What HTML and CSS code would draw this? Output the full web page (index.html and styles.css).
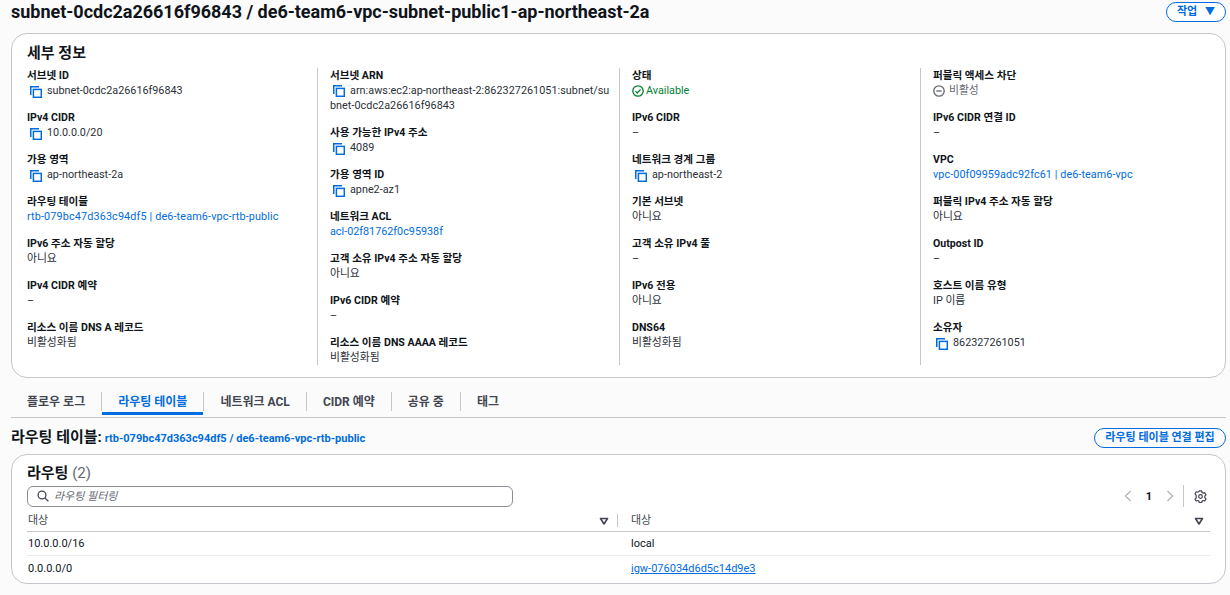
FILE: index.html
```html
<!DOCTYPE html>
<html lang="ko">
<head>
<meta charset="utf-8">
<title>서브넷 세부 정보</title>
<link rel="stylesheet" href="styles.css">
</head>
<body>
<svg class="defs" width="0" height="0" aria-hidden="true"><defs>
<symbol id="copy" viewBox="0 0 12 12"><path d="M.75 9V.75H9" fill="none" stroke="currentColor" stroke-width="1.5"/><rect x="3.4" y="3.4" width="7.9" height="7.9" fill="none" stroke="currentColor" stroke-width="1.5"/></symbol>
<symbol id="sort" viewBox="0 0 10 10"><path d="M1.5 2.500h7L5 8z" fill="none" stroke="currentColor" stroke-width="1.6" stroke-linejoin="round"/></symbol>
</defs></svg>
<header class="page-head">
  <h1>subnet-0cdc2a26616f96843 / de6-team6-vpc-subnet-public1-ap-northeast-2a</h1>
  <button class="btn btn-actions">작업 <span class="caret">▼</span></button>
</header>
<section class="card details">
  <h2>세부 정보</h2>
  <div class="cols">
    <div class="col">
      <div class="kv"><div class="k">서브넷 ID</div><div class="v c"><svg class="ic"><use href="#copy"/></svg>subnet-0cdc2a26616f96843</div></div>
      <div class="kv"><div class="k">IPv4 CIDR</div><div class="v c"><svg class="ic"><use href="#copy"/></svg>10.0.0.0/20</div></div>
      <div class="kv"><div class="k">가용 영역</div><div class="v c"><svg class="ic"><use href="#copy"/></svg>ap-northeast-2a</div></div>
      <div class="kv"><div class="k">라우팅 테이블</div><div class="v"><a class="wide">rtb-079bc47d363c94df5 | de6-team6-vpc-rtb-public</a></div></div>
      <div class="kv"><div class="k">IPv6 주소 자동 할당</div><div class="v">아니요</div></div>
      <div class="kv"><div class="k">IPv4 CIDR 예약</div><div class="v">–</div></div>
      <div class="kv"><div class="k">리소스 이름 DNS A 레코드</div><div class="v">비활성화됨</div></div>
    </div>
    <div class="col">
      <div class="kv"><div class="k">서브넷 ARN</div><div class="v c wrap"><svg class="ic"><use href="#copy"/></svg>arn:aws:ec2:ap-northeast-2:862327261051:subnet/su<br>bnet-0cdc2a26616f96843</div></div>
      <div class="kv"><div class="k">사용 가능한 IPv4 주소</div><div class="v c"><svg class="ic"><use href="#copy"/></svg>4089</div></div>
      <div class="kv"><div class="k">가용 영역 ID</div><div class="v c"><svg class="ic"><use href="#copy"/></svg>apne2-az1</div></div>
      <div class="kv"><div class="k">네트워크 ACL</div><div class="v"><a>acl-02f81762f0c95938f</a></div></div>
      <div class="kv"><div class="k">고객 소유 IPv4 주소 자동 할당</div><div class="v">아니요</div></div>
      <div class="kv"><div class="k">IPv6 CIDR 예약</div><div class="v">–</div></div>
      <div class="kv"><div class="k">리소스 이름 DNS AAAA 레코드</div><div class="v">비활성화됨</div></div>
    </div>
    <div class="col">
      <div class="kv"><div class="k">상태</div><div class="v ok"><svg class="st" viewBox="0 0 12 12"><circle cx="6" cy="6" r="5.2" fill="none" stroke="currentColor" stroke-width="1.3"/><path d="M3.4 6.1l1.9 1.9 3.3-3.6" fill="none" stroke="currentColor" stroke-width="1.3"/></svg>Available</div></div>
      <div class="kv"><div class="k">IPv6 CIDR</div><div class="v">–</div></div>
      <div class="kv"><div class="k">네트워크 경계 그룹</div><div class="v c"><svg class="ic"><use href="#copy"/></svg>ap-northeast-2</div></div>
      <div class="kv"><div class="k">기본 서브넷</div><div class="v">아니요</div></div>
      <div class="kv"><div class="k">고객 소유 IPv4 풀</div><div class="v">–</div></div>
      <div class="kv"><div class="k">IPv6 전용</div><div class="v">아니요</div></div>
      <div class="kv"><div class="k">DNS64</div><div class="v">비활성화됨</div></div>
    </div>
    <div class="col">
      <div class="kv"><div class="k">퍼블릭 액세스 차단</div><div class="v off"><svg class="st" viewBox="0 0 12 12"><circle cx="6" cy="6" r="5.2" fill="none" stroke="currentColor" stroke-width="1.3"/><path d="M3.3 6h5.400" fill="none" stroke="currentColor" stroke-width="1.3"/></svg>비활성</div></div>
      <div class="kv"><div class="k">IPv6 CIDR 연결 ID</div><div class="v">–</div></div>
      <div class="kv"><div class="k">VPC</div><div class="v"><a class="wider">vpc-00f09959adc92fc61 | de6-team6-vpc</a></div></div>
      <div class="kv"><div class="k">퍼블릭 IPv4 주소 자동 할당</div><div class="v">아니요</div></div>
      <div class="kv"><div class="k">Outpost ID</div><div class="v">–</div></div>
      <div class="kv"><div class="k">호스트 이름 유형</div><div class="v">IP 이름</div></div>
      <div class="kv"><div class="k">소유자</div><div class="v c"><svg class="ic"><use href="#copy"/></svg>862327261051</div></div>
    </div>
  </div>
</section>
<nav class="tabs">
  <span class="tab">플로우 로그</span>
  <span class="tab active">라우팅 테이블</span>
  <span class="tab">네트워크 ACL</span>
  <span class="tab">CIDR 예약</span>
  <span class="tab">공유 중</span>
  <span class="tab">태그</span>
</nav>
<div class="rt-head">
  <div class="rt-title"><strong>라우팅 테이블:</strong> <a>rtb-079bc47d363c94df5 / de6-team6-vpc-rtb-public</a></div>
  <button class="btn btn-edit">라우팅 테이블 연결 편집</button>
</div>
<section class="card routes">
  <h2>라우팅 <span class="count">(2)</span></h2>
  <div class="tools">
    <div class="search">
      <svg class="mag" viewBox="0 0 12 12"><circle cx="5" cy="5" r="3.9" fill="none" stroke="currentColor" stroke-width="1.3"/><path d="M8 8l3.400 3.400" stroke="currentColor" stroke-width="1.3"/></svg>
      <span>라우팅 필터링</span>
    </div>
    <div class="pager">
      <svg class="chev" viewBox="0 0 8 12"><path d="M6.500 1L1.500 6l5 5" fill="none" stroke="currentColor" stroke-width="1.3"/></svg>
      <b>1</b>
      <svg class="chev" viewBox="0 0 8 12"><path d="M1.500 1l5 5-5 5" fill="none" stroke="currentColor" stroke-width="1.3"/></svg>
      <i class="vsep"></i>
      <svg class="gear" viewBox="0 0 14 14"><circle cx="7" cy="7" r="2" fill="none" stroke="currentColor" stroke-width="1.3"/><path d="M5.700 1h2.600l.4 1.700 1.300.7 1.600-.5 1.300 2.200-1.200 1.400v1.800l1.200 1.300-1.300 2.200-1.600-.5-1.300.7-.4 1.700H5.700l-.4-1.700-1.300-.7-1.600.5L1.100 10.100 2.300 8.800V5.500L1.100 4.100 2.400 1.900l1.600.5 1.300-.7z" fill="none" stroke="currentColor" stroke-width="1.3" stroke-linejoin="round"/></svg>
    </div>
  </div>
  <div class="table">
    <div class="row head">
      <div class="cell first"><span>대상</span><svg class="sort"><use href="#sort"/></svg><i class="csep"></i></div>
      <div class="cell second"><span>대상</span><svg class="sort"><use href="#sort"/></svg></div>
    </div>
    <div class="row">
      <div class="cell first">10.0.0.0/16</div>
      <div class="cell second">local</div>
    </div>
    <div class="row last">
      <div class="cell first">0.0.0.0/0</div>
      <div class="cell second"><a class="ul">igw-076034d6d5c14d9e3</a></div>
    </div>
  </div>
</section>
</body>
</html>
```
FILE: styles.css
```css
* { box-sizing: border-box; }
html, body { height: 100%; }
body {
  margin: 0;
  padding: 0 4px 0 11px;
  background: #fbfbfb;
  color: #0f141a;
  font: 12px/15px "Roboto", "Noto Sans CJK KR", sans-serif;
  overflow: hidden;
}
.defs { position: absolute; }
a { color: #006ce0; }
.page-head {
  height: 33px;
  display: flex;
  align-items: flex-start;
  justify-content: space-between;
}
h1 {
  margin: 0;
  font-size: 18px;
  line-height: 24px;
  font-weight: 700;
  letter-spacing: -0.015px;
}
.btn {
  font: 700 11px/14px "Roboto", "Noto Sans CJK KR", sans-serif;
  color: #006ce0;
  background: #fff;
  border: 1.5px solid #006ce0;
  border-radius: 12px;
  padding: 0;
}
.btn-actions { width: 60px; height: 20px; margin-top: 2px; }
.caret { margin-left: 5px; font-size: 10px; }
.btn-edit { width: 132px; height: 20px; background: #fbfbfb; }
.card {
  background: #fff;
  border: 1px solid #c6c6cd;
  border-radius: 16px;
}
h2 { margin: 0; font-size: 15px; font-weight: 700; line-height: 20px; }
.details { height: 345px; padding: 9px 0 0 15px; }
.cols { display: grid; grid-template-columns: 290px 302px 301px 290px; margin-top: 5px; }
.col { padding-left: 12px; border-left: 1px solid #c6c6cd; }
.col:first-child { padding-left: 0; border-left: 0; }
.kv { margin-bottom: 12px; }
.kv:last-child { margin-bottom: 0; }
.k { font-weight: 700; font-size: 10.6px; color: #0f141a; }
.v { font-size: 10.8px; color: #2b3038; display: flex; align-items: center; }
.v.wrap { display: block; letter-spacing: 0.04px; }
.wrap .ic { vertical-align: -3px; }
.wide { letter-spacing: 0.15px; }
.wider { letter-spacing: 0.08px; }
.ic { width: 12px; height: 12px; margin: 2px 5px 0 3px; color: #006ce0; flex: none; }
.st { width: 12px; height: 12px; margin-right: 2px; flex: none; }
.ok { color: #00802f; }
.off { color: #656871; }
.off .st { margin-right: 4px; }
.tabs {
  margin-top: 14px;
  height: 26px;
  display: flex;
  border-bottom: 1px solid #c6c6cd;
}
.tab {
  position: relative;
  padding: 3px 16px 0;
  height: 19px;
  font-weight: 700;
  font-size: 12px;
  color: #424650;
  border-left: 1px solid #c6c6cd;
}
.tab:first-child { border-left: 0; }
.tab.active { color: #006ce0; }
.tab.active::after {
  content: "";
  position: absolute;
  left: 0; right: 0; bottom: -4px;
  height: 3px;
  background: #006ce0;
}
.rt-head { height: 36px; padding-top: 10px; display: flex; justify-content: space-between; align-items: flex-start; }
.rt-title { margin-top: -1px; }
.rt-title strong { font-size: 15px; font-weight: 700; line-height: 20px; }
.rt-title a { font-size: 11px; font-weight: 700; }
.routes { height: 130px; padding: 8px 15px 0; }
.count { font-weight: 400; color: #656871; }
.tools { display: flex; justify-content: space-between; align-items: center; height: 24px; margin-top: 1px; }
.search {
  width: 486px; height: 21px;
  border: 1px solid #8c8c94;
  border-radius: 6px;
  display: flex; align-items: center;
  padding-left: 9px;
  font-style: italic; font-size: 11px; color: #656871;
}
.mag { width: 12px; height: 12px; margin-right: 5px; color: #424650; }
.pager { display: flex; align-items: center; }
.pager b { width: 12px; text-align: center; font-size: 11px; margin: 0 11px; }
.chev { width: 8px; height: 12px; color: #b4b4bb; }
.vsep { width: 1px; height: 22px; background: #c6c6cd; margin: 0 10px 0 9px; }
.gear { width: 13px; height: 13px; color: #424650; margin-right: 3px; }
.table { font-size: 11px; }
.row { display: grid; grid-template-columns: 591px 592px; height: 24px; border-bottom: 1px solid #ebebf0; align-items: center; }
.row.last { border-bottom: 0; }
.row.head { border-bottom: 1px solid #c6c6cd; color: #424650; padding-top: 2px; }
.cell { position: relative; display: flex; align-items: center; justify-content: space-between; padding-left: 1px; }
.second { padding-left: 13px; padding-right: 6px; }
.first { padding-right: 9px; }
.sort { width: 10px; height: 10px; color: #424650; }
.csep { position: absolute; right: 0; top: 1px; width: 1px; height: 13px; background: #c6c6cd; }
.ul { text-decoration: underline; }
```
